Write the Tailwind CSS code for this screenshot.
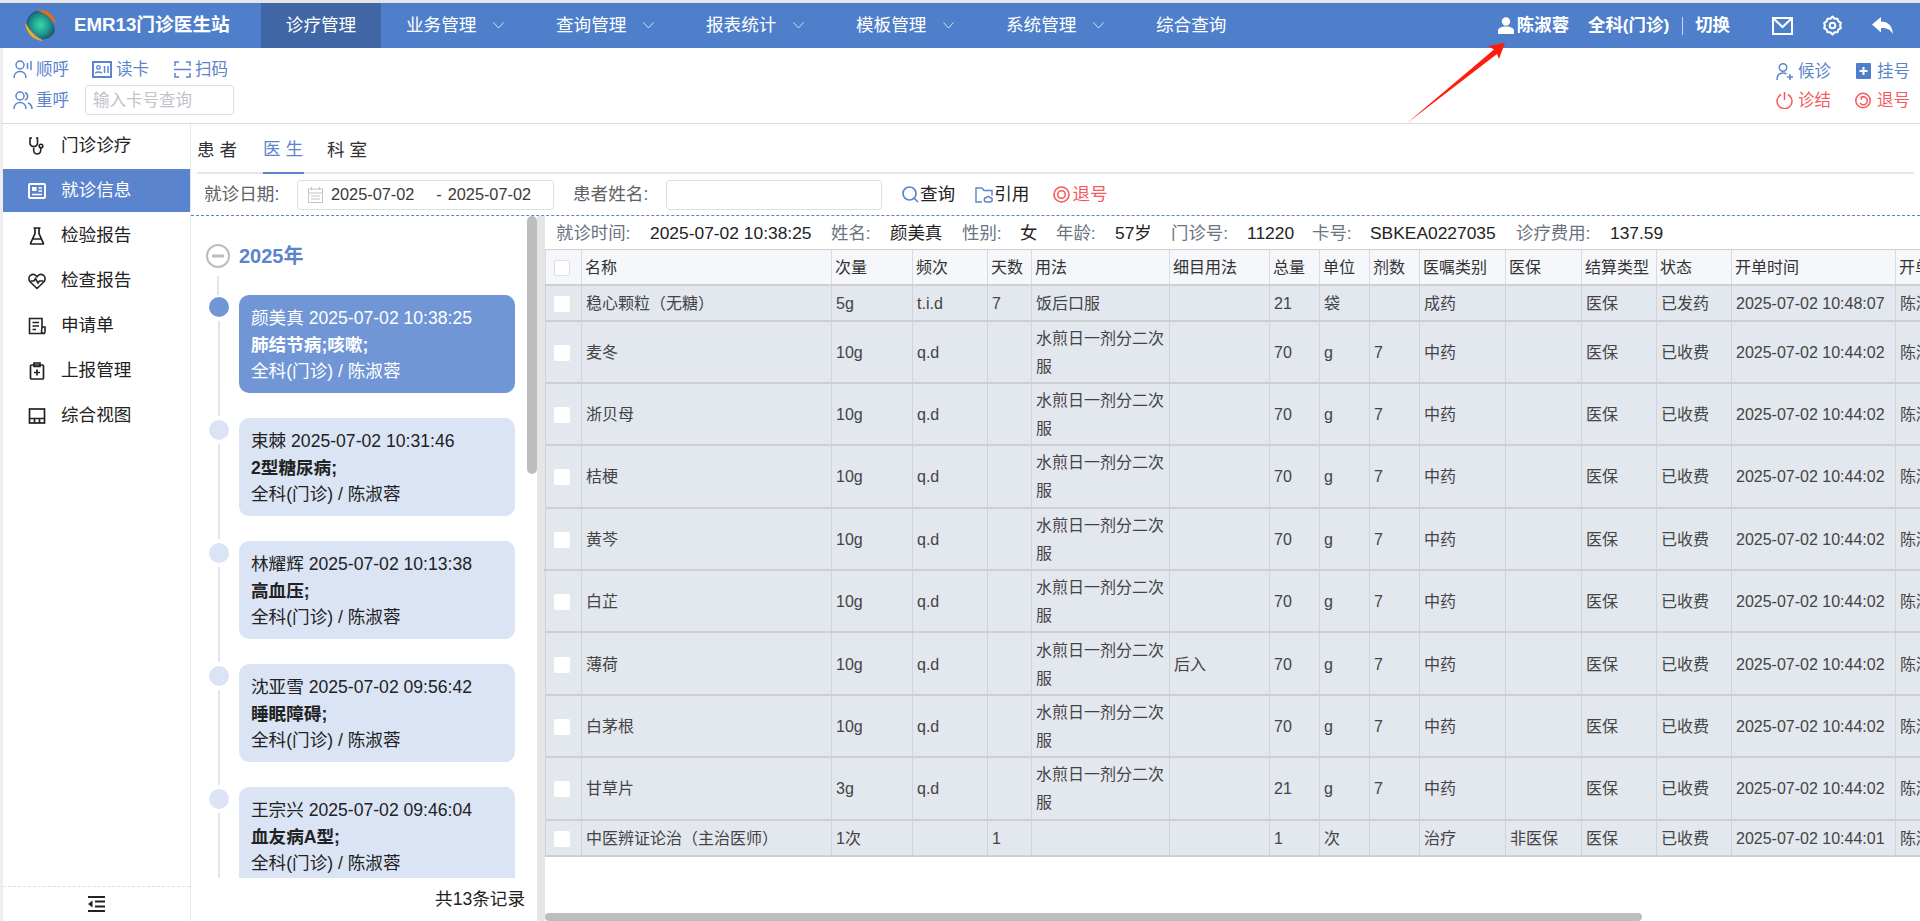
<!DOCTYPE html>
<html lang="zh">
<head>
<meta charset="utf-8">
<title>EMR13门诊医生站</title>
<script src="https://cdn.jsdelivr.net/npm/@tailwindcss/browser@4"></script>
</head>
<body class="m-0 bg-white">
<div class="relative flex flex-col w-[1920px] h-[921px] overflow-hidden bg-white text-[#222] [font-family:'Liberation_Sans','Noto_Sans_CJK_SC',sans-serif]">
  <div class="h-[3px] bg-[#e6e6e6] shrink-0"></div>
  <!-- header -->
  <header class="flex items-center h-[45px] shrink-0 bg-[#4f7fcb] text-white">
    <div class="flex items-center w-[261px] h-full pl-[25px]">
      <svg class="w-[31px] h-[31px] shrink-0" viewBox="0 0 30 30">
        <defs>
          <radialGradient id="lg" cx="50%" cy="50%" r="55%"><stop offset="0" stop-color="#3bd8aa"/><stop offset=".55" stop-color="#1f9c8e"/><stop offset="1" stop-color="#1c4f6b"/></radialGradient>
        </defs>
        <path d="M2 10C4 4 9 0 15 .6c4 2 8 5 12 12 2 4 2 8 1 10-3 4-7 6-11 6C11 25 5 20 2 17c-1-2-1-5 0-7Z" fill="url(#lg)"/>
        <path d="M12 .6C20-1 29 3 29.6 14.500 27 9 20 3.500 12 .6Z" fill="#ee6a0c"/>
        <path d="M.4 12.500C.8 20 6 29 18 29.800 11 27 4.500 20 .4 12.500Z" fill="#f0a81e"/>
        <path d="M.4 12.500C1 20 6 29 18 29.800 11.500 28.500 5 22 2.500 16L.4 12.500Z" fill="#f5ab1f"/>
      </svg>
      <span class="ml-[18px] text-[18.7px] font-bold whitespace-nowrap">EMR13门诊医生站</span>
    </div>
    <nav class="flex items-center h-full text-[17.6px]">
      <a class="flex items-center justify-center w-[120px] h-full bg-[#4066a6]">诊疗管理</a>
      <a class="flex items-center w-[150px] h-full pl-[25px] gap-[17px]">业务管理<svg class="w-[11px] h-[7px]" viewBox="0 0 11 7" fill="none" stroke="#d5e0f3" stroke-width="1"><path d="M.5.5 5.500 6l5-5.500"/></svg></a>
      <a class="flex items-center w-[150px] h-full pl-[25px] gap-[17px]">查询管理<svg class="w-[11px] h-[7px]" viewBox="0 0 11 7" fill="none" stroke="#d5e0f3" stroke-width="1"><path d="M.5.5 5.500 6l5-5.500"/></svg></a>
      <a class="flex items-center w-[150px] h-full pl-[25px] gap-[17px]">报表统计<svg class="w-[11px] h-[7px]" viewBox="0 0 11 7" fill="none" stroke="#d5e0f3" stroke-width="1"><path d="M.5.5 5.500 6l5-5.500"/></svg></a>
      <a class="flex items-center w-[150px] h-full pl-[25px] gap-[17px]">模板管理<svg class="w-[11px] h-[7px]" viewBox="0 0 11 7" fill="none" stroke="#d5e0f3" stroke-width="1"><path d="M.5.5 5.500 6l5-5.500"/></svg></a>
      <a class="flex items-center w-[150px] h-full pl-[25px] gap-[17px]">系统管理<svg class="w-[11px] h-[7px]" viewBox="0 0 11 7" fill="none" stroke="#d5e0f3" stroke-width="1"><path d="M.5.5 5.500 6l5-5.500"/></svg></a>
      <a class="flex items-center w-[150px] h-full pl-[25px]">综合查询</a>
    </nav>
    <div class="ml-auto flex items-center h-full pr-[27px] text-[17.4px] font-bold whitespace-nowrap">
      <svg class="w-[16px] h-[17px]" viewBox="0 0 16 17" fill="#fff"><circle cx="8" cy="4.500" r="4.200"/><path d="M0 17v-3c0-3 3-4.500 8-4.500s8 1.500 8 4.500v3Z"/></svg>
      <span class="ml-[3px]">陈淑蓉</span>
      <span class="ml-[19px]">全科(门诊)</span>
      <span class="ml-[13px] w-px h-[18px] bg-white/70"></span>
      <span class="ml-[12px]">切换</span>
      <svg class="ml-[42px] w-[21px] h-[18px]" viewBox="0 0 21 18" fill="none" stroke="#fff" stroke-width="2"><rect x="1" y="1" width="19" height="16"/><path d="M1.500 1.500 10.500 10l9-8.500"/></svg>
      <svg class="ml-[29px] w-[21px] h-[21px]" viewBox="0 0 24 24" fill="none" stroke="#fff" stroke-width="2.400" stroke-linejoin="round"><path d="M12 1.800 14.500 4.300h3.200l1 3.100 2.800 1.700-.8 2.900.8 2.900-2.800 1.700-1 3.100h-3.200L12 22.200l-2.500-2.500H6.300l-1-3.100-2.800-1.700.8-2.900-.8-2.900 2.800-1.700 1-3.100h3.200Z"/><circle cx="12" cy="12" r="3.200"/></svg>
      <svg class="ml-[29px] w-[21px] h-[17px]" viewBox="0 0 21 17" fill="#fff"><path d="M0 7.500 9 0v4.500c7 0 11 4 12 12.500-2.500-4.500-6-6-12-6v4.500Z"/></svg>
    </div>
  </header>
  <!-- toolbar -->
  <div class="flex justify-between h-[76px] shrink-0 border-l-[3px] border-b border-l-[#eeeeee] border-b-[#dcdcdc] text-[16.5px] text-[#5b84cc] whitespace-nowrap">
    <div class="flex flex-col pl-[10px] pt-[11px]">
      <div class="flex items-center h-[20px]">
        <svg class="w-[20px] h-[18px]" viewBox="0 0 20 18" fill="none" stroke="#5b84cc" stroke-width="1.500"><circle cx="7" cy="5" r="4"/><path d="M1 18c0-4 2.500-6.500 6-6.500s6 2.500 6 6.500"/><path d="M14.500 3v6M18 1v9"/></svg>
        <span class="ml-[3px]">顺呼</span>
        <svg class="ml-[23px] w-[20px] h-[17px]" viewBox="0 0 20 17" fill="none" stroke="#5b84cc"><rect x="1" y="1" width="18" height="15" stroke-width="2"/><circle cx="6.500" cy="6.500" r="1.800" stroke-width="1.300"/><path d="M3.500 12.500c0-2 6-2 6 0M12.500 5v7M16 5v7" stroke-width="1.500"/></svg>
        <span class="ml-[4px]">读卡</span>
        <svg class="ml-[25px] w-[17px] h-[17px]" viewBox="0 0 17 17" fill="none" stroke="#5b84cc" stroke-width="1.500"><path d="M1 5V1h4M12 1h4v4M1 12v4h4M12 16h4v-4M0 8.500h17"/></svg>
        <span class="ml-[4px]">扫码</span>
      </div>
      <div class="flex items-center h-[30px] mt-[6px]">
        <svg class="w-[20px] h-[18px]" viewBox="0 0 20 18" fill="none" stroke="#5b84cc" stroke-width="1.500"><circle cx="7" cy="5" r="4"/><path d="M1 18c0-4 2.500-6.500 6-6.500s6 2.500 6 6.500M12 1.500a4 4 0 0 1 0 7.500M15 12c2.500 1 4 3 4 6"/></svg>
        <span class="ml-[3px]">重呼</span>
        <div class="ml-[16px] flex items-center w-[149px] h-[30px] px-[7px] rounded-[3px] border border-[#dcdfe6] bg-white text-[#bfc3cb]">输入卡号查询</div>
      </div>
    </div>
    <div class="flex flex-col pr-[10px] pt-[14px]">
      <div class="flex items-center h-[18px]">
        <svg class="w-[17px] h-[17px]" viewBox="0 0 17 17" fill="none" stroke="#5b84cc" stroke-width="1.500"><circle cx="7" cy="4.500" r="3.700"/><path d="M1 17c0-4 2-7 6-7 1.500 0 2.500.4 3.500 1M11 14h6M14 11v6"/></svg>
        <span class="ml-[5px]">候诊</span>
        <svg class="ml-[25px] w-[15px] h-[16px]" viewBox="0 0 15 16"><rect width="15" height="16" rx="1" fill="#4f7fcb"/><path d="M3.500 8h8M7.500 4v8" stroke="#fff" stroke-width="2"/></svg>
        <span class="ml-[6px]">挂号</span>
      </div>
      <div class="flex items-center h-[18px] mt-[11px] text-[#f65a5f]">
        <svg class="w-[17px] h-[17px]" viewBox="0 0 17 17" fill="none" stroke="#f65a5f" stroke-width="1.500"><path d="M8.500 0v8M5 2.500a7.500 7.500 0 1 0 7 0"/></svg>
        <span class="ml-[5px]">诊结</span>
        <svg class="ml-[24px] w-[16px] h-[17px]" viewBox="0 0 16 17" fill="none" stroke="#f65a5f" stroke-width="1.500"><circle cx="8" cy="8.500" r="7.200"/><path d="M6 5.500A4 4 0 1 1 5 11"/><path d="M6.500 8 6 5.300 8.700 5" stroke-width="1.200"/></svg>
        <span class="ml-[6px]">退号</span>
      </div>
    </div>
  </div>
  <!-- main -->
  <div class="flex flex-1 min-h-0 border-l-[3px] border-l-[#eeeeee]">
    <!-- sidebar -->
    <aside class="flex flex-col w-[188px] shrink-0 border-r border-[#e4e7ed] text-[17.6px] whitespace-nowrap">
      <div class="flex flex-col flex-1 gap-[2px]">
        <a class="flex items-center h-[43px] pl-[25px]"><svg class="w-[18px] h-[18px] mr-[15px]" viewBox="0 0 18 18" fill="none" stroke="#222" stroke-width="1.600"><path d="M4 1H2v6a4 4 0 0 0 7.500 0V1H8"/><path d="M5.700 11v2.500a3.500 3.500 0 0 0 7 0V11"/><circle cx="13" cy="9" r="1.800"/></svg>门诊诊疗</a>
        <a class="flex items-center h-[43px] pl-[25px] bg-[#5a84ce] text-white"><svg class="w-[18px] h-[18px] mr-[15px]" viewBox="0 0 18 18" fill="none" stroke="#fff"><rect x="1" y="2" width="16" height="14" rx="1" stroke-width="2"/><rect x="4" y="5" width="4.500" height="4" fill="#fff" stroke="none"/><path d="M10.500 6h3.500M10.500 9h3.500M4 12.500h10" stroke-width="1.500"/></svg>就诊信息</a>
        <a class="flex items-center h-[43px] pl-[25px]"><svg class="w-[18px] h-[18px] mr-[15px]" viewBox="0 0 18 18" fill="none" stroke="#222" stroke-width="1.700"><path d="M5.500 1h7M7 1v5.500L2.500 16.500a.5.5 0 0 0 .5.5h12a.5.5 0 0 0 .5-.5L11 6.500V1M5 12h8"/></svg>检验报告</a>
        <a class="flex items-center h-[43px] pl-[25px]"><svg class="w-[18px] h-[18px] mr-[15px]" viewBox="0 0 18 18" fill="none" stroke="#222" stroke-width="1.600"><path d="M9 16.500 2.300 10C.2 7.800.6 4.500 2.700 3.100 5 1.700 7.600 2.500 9 4.800c1.400-2.300 4-3.100 6.300-1.700 2.100 1.400 2.500 4.700.4 6.900Z"/><path d="M2.500 9h3.500l1.500-2.500 2.500 4.500 1.500-2h4"/></svg>检查报告</a>
        <a class="flex items-center h-[43px] pl-[25px]"><svg class="w-[18px] h-[18px] mr-[15px]" viewBox="0 0 18 18" fill="none" stroke="#222" stroke-width="1.600"><path d="M14 10V1.500H1.500v15H17M14 10h3v5a1.800 1.800 0 0 1-3.500 0ZM4.500 5.500H11M4.500 9H11M4.500 12.500H8"/></svg>申请单</a>
        <a class="flex items-center h-[43px] pl-[25px]"><svg class="w-[18px] h-[18px] mr-[15px]" viewBox="0 0 18 18" fill="none" stroke="#222" stroke-width="1.700"><rect x="2.500" y="3" width="13" height="14" rx="1"/><path d="M6 1h6v3.500H6ZM6 10.500h6M9 7.500v6"/></svg>上报管理</a>
        <a class="flex items-center h-[43px] pl-[25px]"><svg class="w-[18px] h-[18px] mr-[15px]" viewBox="0 0 18 18" fill="none" stroke="#222" stroke-width="1.700"><rect x="1.500" y="2" width="15" height="14"/><path d="M1.500 11.500h15M6.500 11.500V16M11.500 11.500V16"/></svg>综合视图</a>
      </div>
      <div class="flex items-center justify-center h-[35px] shrink-0 border-t border-dashed border-[#d5e0f2]">
        <svg class="w-[17px] h-[16px]" viewBox="0 0 17 16" fill="#222"><path d="M0 0h17v2H0ZM0 14h17v2H0ZM7 4.500h10v2H7ZM7 9.500h10v2H7ZM4.500 4.500v7L0 8Z"/></svg>
      </div>
    </aside>
    <!-- content -->
    <section class="flex flex-col flex-1 min-w-0">
      <div class="flex items-end h-[50px] shrink-0 mx-[6px] border-b-2 border-[#e4e7ed] text-[17.6px] tracking-[5px] whitespace-nowrap">
        <span class="h-[37px] -mb-[2px] pr-[20.8px] text-[#303133]">患者</span>
        <span class="h-[38px] -mb-[2px] w-[41px] mr-[23px] border-b-2 border-[#5b84cc] text-[#5b84cc]">医生</span>
        <span class="h-[37px] -mb-[2px] text-[#303133]">科室</span>
      </div>
      <div class="flex items-center h-[42px] shrink-0 pl-[13px] border-b border-dashed border-[#5b84cc] whitespace-nowrap">
        <span class="w-[93px] text-[17.6px] text-[#606266]">就诊日期:</span>
        <div class="flex items-center w-[257px] h-[30px] pl-[10px] rounded-[3px] border border-[#dcdfe6] text-[16.3px] text-[#3a3a3a]">
          <svg class="w-[15px] h-[16px]" viewBox="0 0 15 16" fill="none" stroke="#c0c4cc"><rect x=".5" y="2" width="14" height="13.500"/><path d="M.5 6h14M3.500 0v3M11.500 0v3M3 9h9M3 12h9" /></svg>
          <span class="ml-[8px]">2025-07-02</span>
          <span class="ml-[22px]">-</span>
          <span class="ml-[6px]">2025-07-02</span>
        </div>
        <span class="ml-[19px] w-[93px] text-[17.6px] text-[#606266]">患者姓名:</span>
        <div class="w-[216px] h-[30px] rounded-[3px] border border-[#dcdfe6]"></div>
        <svg class="ml-[20px] w-[17px] h-[17px]" viewBox="0 0 17 17" fill="none" stroke="#5b84cc" stroke-width="1.700"><circle cx="7.500" cy="7.500" r="6.500"/><path d="m12 12 4 4"/></svg>
        <span class="ml-[1px] text-[17.6px]">查询</span>
        <svg class="ml-[20px] w-[18px] h-[16px]" viewBox="0 0 18 16" fill="none" stroke="#5b84cc" stroke-width="1.400"><path d="M7 15H1V1h6l2 2.500h8v5"/><path d="M11.500 10.500a2 2 0 0 1 3.500 0 2.200 2.200 0 0 1 0 4.500h-3.500a2.200 2.200 0 0 1 0-4.500Z"/></svg>
        <span class="ml-[1px] text-[17.6px]">引用</span>
        <svg class="ml-[24px] w-[17px] h-[17px]" viewBox="0 0 17 17" fill="none" stroke="#f65a5f" stroke-width="1.600"><circle cx="8.500" cy="8.500" r="7.500"/><circle cx="8.500" cy="8.500" r="3.800"/></svg>
        <span class="ml-[2px] text-[17.6px] text-[#f65a5f]">退号</span>
      </div>
      <div class="flex flex-1 min-h-0">
        <!-- timeline -->
        <div class="relative flex flex-col w-[346px] shrink-0 text-[17.6px] leading-[26.5px] whitespace-nowrap">
          <div class="h-[662px] overflow-hidden pl-[15px] pt-[28px]">
            <div class="flex items-center h-[24px]">
              <svg class="w-[24px] h-[24px]" viewBox="0 0 24 24" fill="none" stroke="#bdbdbd" stroke-width="2"><circle cx="12" cy="12" r="11"/><path d="M6 12h12" stroke-width="3"/></svg>
              <span class="ml-[9px] text-[20px] font-bold text-[#5b84cc]">2025年</span>
            </div>
            <div class="ml-[11px] mt-[8px] w-[2px] h-[19px] bg-[#dfe6f2]"></div>
            <div class="flex h-[123px] pl-[3px]">
              <div class="flex flex-col items-center w-[20px] shrink-0 pt-[2px]"><span class="w-[20px] h-[20px] rounded-full bg-[#7096d6]"></span><span class="w-[2px] h-[95px] mt-[4px] bg-[#dfe6f2]"></span></div>
              <div class="ml-[10px] w-[276px] h-[98px] pl-[12px] pt-[10px] rounded-[10px] bg-[#7096d6] text-white"><div>颜美真 2025-07-02 10:38:25</div><div class="font-bold">肺结节病;咳嗽;</div><div>全科(门诊) / 陈淑蓉</div></div>
            </div>
            <div class="flex h-[123px] pl-[3px]">
              <div class="flex flex-col items-center w-[20px] shrink-0 pt-[2px]"><span class="w-[20px] h-[20px] rounded-full bg-[#dbe4f5]"></span><span class="w-[2px] h-[95px] mt-[4px] bg-[#dfe6f2]"></span></div>
              <div class="ml-[10px] w-[276px] h-[98px] pl-[12px] pt-[10px] rounded-[10px] bg-[#dbe4f5]"><div>束棘 2025-07-02 10:31:46</div><div class="font-bold">2型糖尿病;</div><div>全科(门诊) / 陈淑蓉</div></div>
            </div>
            <div class="flex h-[123px] pl-[3px]">
              <div class="flex flex-col items-center w-[20px] shrink-0 pt-[2px]"><span class="w-[20px] h-[20px] rounded-full bg-[#dbe4f5]"></span><span class="w-[2px] h-[95px] mt-[4px] bg-[#dfe6f2]"></span></div>
              <div class="ml-[10px] w-[276px] h-[98px] pl-[12px] pt-[10px] rounded-[10px] bg-[#dbe4f5]"><div>林耀辉 2025-07-02 10:13:38</div><div class="font-bold">高血压;</div><div>全科(门诊) / 陈淑蓉</div></div>
            </div>
            <div class="flex h-[123px] pl-[3px]">
              <div class="flex flex-col items-center w-[20px] shrink-0 pt-[2px]"><span class="w-[20px] h-[20px] rounded-full bg-[#dbe4f5]"></span><span class="w-[2px] h-[95px] mt-[4px] bg-[#dfe6f2]"></span></div>
              <div class="ml-[10px] w-[276px] h-[98px] pl-[12px] pt-[10px] rounded-[10px] bg-[#dbe4f5]"><div>沈亚雪 2025-07-02 09:56:42</div><div class="font-bold">睡眠障碍;</div><div>全科(门诊) / 陈淑蓉</div></div>
            </div>
            <div class="flex h-[123px] pl-[3px]">
              <div class="flex flex-col items-center w-[20px] shrink-0 pt-[2px]"><span class="w-[20px] h-[20px] rounded-full bg-[#dbe4f5]"></span><span class="w-[2px] h-[95px] mt-[4px] bg-[#dfe6f2]"></span></div>
              <div class="ml-[10px] w-[276px] h-[98px] pl-[12px] pt-[10px] rounded-[10px] bg-[#dbe4f5]"><div>王宗兴 2025-07-02 09:46:04</div><div class="font-bold">血友病A型;</div><div>全科(门诊) / 陈淑蓉</div></div>
            </div>
          </div>
          <div class="flex items-center justify-end flex-1 pr-[12px]">共13条记录</div>
          <div class="absolute top-0 right-0 w-[10px] h-[258px] rounded-[5px] bg-[#bdbdbd]"></div>
        </div>
        <!-- gutter -->
        <div class="relative w-[8px] shrink-0 bg-[#e5e5e5]">
          <span class="absolute left-[7px] top-[349px] w-0 h-0 border-y-[5px] border-y-transparent border-r-[7px] border-r-[#666]"></span>
        </div>
        <!-- detail -->
        <div class="relative flex flex-col flex-1 min-w-0 overflow-hidden">
          <div class="flex items-center h-[33px] shrink-0 pl-[11px] pt-[2px] text-[17.4px] text-[#6b7280] whitespace-nowrap">
            <span class="w-[94px]">就诊时间:</span><span class="w-[181px] text-[#222]">2025-07-02 10:38:25</span>
            <span class="w-[59px]">姓名:</span><span class="w-[72px] text-[#222]">颜美真</span>
            <span class="w-[58px]">性别:</span><span class="w-[36px] text-[#222]">女</span>
            <span class="w-[59px]">年龄:</span><span class="w-[56px] text-[#222]">57岁</span>
            <span class="w-[76px]">门诊号:</span><span class="w-[65px] text-[#222]">11220</span>
            <span class="w-[58px]">卡号:</span><span class="w-[146px] text-[#222]">SBKEA0227035</span>
            <span class="w-[94px]">诊疗费用:</span><span class="text-[#222]">137.59</span>
          </div>
          <table class="table-fixed border-collapse w-[1469px] text-[16px] leading-7 text-[#444] [&_td]:border-x [&_td]:border-x-[#d0d3d9] [&_td]:border-y-2 [&_td]:border-y-[#cfcfcf] [&_td]:px-[4px] [&_td]:pt-[2px] [&_td]:pb-0 [&_td]:bg-[#e3e7ee] [&_th]:border-x [&_th]:border-x-[#d8dbe1] [&_th]:border-y [&_th]:border-y-[#cfcfcf] [&_th]:bg-[#f5f7fb] [&_th]:px-[3px] [&_th]:pt-[3px] [&_th]:pb-0 [&_th]:font-normal [&_th]:text-left [&_th]:h-[35px] [&_th]:text-[#333]">
            <colgroup>
              <col class="w-[36px]"><col class="w-[250px]"><col class="w-[81px]"><col class="w-[75px]"><col class="w-[44px]"><col class="w-[138px]"><col class="w-[100px]"><col class="w-[50px]"><col class="w-[50px]"><col class="w-[50px]"><col class="w-[86px]"><col class="w-[76px]"><col class="w-[75px]"><col class="w-[75px]"><col class="w-[164px]"><col class="w-[119px]">
            </colgroup>
            <thead>
              <tr><th><span class="block ml-[5px] w-[16px] h-[16px] rounded-[2px] border border-[#dcdfe6] bg-white"></span></th><th>名称</th><th>次量</th><th>频次</th><th>天数</th><th>用法</th><th>细目用法</th><th>总量</th><th>单位</th><th>剂数</th><th>医嘱类别</th><th>医保</th><th>结算类型</th><th>状态</th><th>开单时间</th><th>开单医生</th></tr>
            </thead>
            <tbody>
              <tr class="h-[36px]"><td><span class="block ml-[4px] w-[16px] h-[16px] rounded-[2px] bg-white"></span></td><td>稳心颗粒（无糖）</td><td>5g</td><td>t.i.d</td><td>7</td><td>饭后口服</td><td></td><td>21</td><td>袋</td><td></td><td>成药</td><td></td><td>医保</td><td>已发药</td><td>2025-07-02 10:48:07</td><td>陈淑蓉</td></tr>
              <tr class="h-[62.4px]"><td><span class="block ml-[4px] w-[16px] h-[16px] rounded-[2px] bg-white"></span></td><td>麦冬</td><td>10g</td><td>q.d</td><td></td><td>水煎日一剂分二次服</td><td></td><td>70</td><td>g</td><td>7</td><td>中药</td><td></td><td>医保</td><td>已收费</td><td>2025-07-02 10:44:02</td><td>陈淑蓉</td></tr>
              <tr class="h-[62.4px]"><td><span class="block ml-[4px] w-[16px] h-[16px] rounded-[2px] bg-white"></span></td><td>浙贝母</td><td>10g</td><td>q.d</td><td></td><td>水煎日一剂分二次服</td><td></td><td>70</td><td>g</td><td>7</td><td>中药</td><td></td><td>医保</td><td>已收费</td><td>2025-07-02 10:44:02</td><td>陈淑蓉</td></tr>
              <tr class="h-[62.4px]"><td><span class="block ml-[4px] w-[16px] h-[16px] rounded-[2px] bg-white"></span></td><td>桔梗</td><td>10g</td><td>q.d</td><td></td><td>水煎日一剂分二次服</td><td></td><td>70</td><td>g</td><td>7</td><td>中药</td><td></td><td>医保</td><td>已收费</td><td>2025-07-02 10:44:02</td><td>陈淑蓉</td></tr>
              <tr class="h-[62.4px]"><td><span class="block ml-[4px] w-[16px] h-[16px] rounded-[2px] bg-white"></span></td><td>黄芩</td><td>10g</td><td>q.d</td><td></td><td>水煎日一剂分二次服</td><td></td><td>70</td><td>g</td><td>7</td><td>中药</td><td></td><td>医保</td><td>已收费</td><td>2025-07-02 10:44:02</td><td>陈淑蓉</td></tr>
              <tr class="h-[62.4px]"><td><span class="block ml-[4px] w-[16px] h-[16px] rounded-[2px] bg-white"></span></td><td>白芷</td><td>10g</td><td>q.d</td><td></td><td>水煎日一剂分二次服</td><td></td><td>70</td><td>g</td><td>7</td><td>中药</td><td></td><td>医保</td><td>已收费</td><td>2025-07-02 10:44:02</td><td>陈淑蓉</td></tr>
              <tr class="h-[62.4px]"><td><span class="block ml-[4px] w-[16px] h-[16px] rounded-[2px] bg-white"></span></td><td>薄荷</td><td>10g</td><td>q.d</td><td></td><td>水煎日一剂分二次服</td><td>后入</td><td>70</td><td>g</td><td>7</td><td>中药</td><td></td><td>医保</td><td>已收费</td><td>2025-07-02 10:44:02</td><td>陈淑蓉</td></tr>
              <tr class="h-[62.4px]"><td><span class="block ml-[4px] w-[16px] h-[16px] rounded-[2px] bg-white"></span></td><td>白茅根</td><td>10g</td><td>q.d</td><td></td><td>水煎日一剂分二次服</td><td></td><td>70</td><td>g</td><td>7</td><td>中药</td><td></td><td>医保</td><td>已收费</td><td>2025-07-02 10:44:02</td><td>陈淑蓉</td></tr>
              <tr class="h-[62.4px]"><td><span class="block ml-[4px] w-[16px] h-[16px] rounded-[2px] bg-white"></span></td><td>甘草片</td><td>3g</td><td>q.d</td><td></td><td>水煎日一剂分二次服</td><td></td><td>21</td><td>g</td><td>7</td><td>中药</td><td></td><td>医保</td><td>已收费</td><td>2025-07-02 10:44:02</td><td>陈淑蓉</td></tr>
              <tr class="h-[36px]"><td><span class="block ml-[4px] w-[16px] h-[16px] rounded-[2px] bg-white"></span></td><td>中医辨证论治（主治医师）</td><td>1次</td><td></td><td>1</td><td></td><td></td><td>1</td><td>次</td><td></td><td>治疗</td><td>非医保</td><td>医保</td><td>已收费</td><td>2025-07-02 10:44:01</td><td>陈淑蓉</td></tr>
            </tbody>
          </table>
          <div class="absolute left-0 bottom-0 w-[1097px] h-[8px] rounded-[4px] bg-[#bdbdbd]"></div>
        </div>
      </div>
    </section>
  </div>
  <!-- annotation arrow -->
  <svg class="absolute left-[1400px] top-[38px] w-[110px] h-[90px]" viewBox="1400 38 110 90"><polygon points="1406.5,123.500 1494,49.500 1488,46 1505,42.700 1499,59 1497,54" fill="#ff1c0d"/></svg>
</div>
</body>
</html>
